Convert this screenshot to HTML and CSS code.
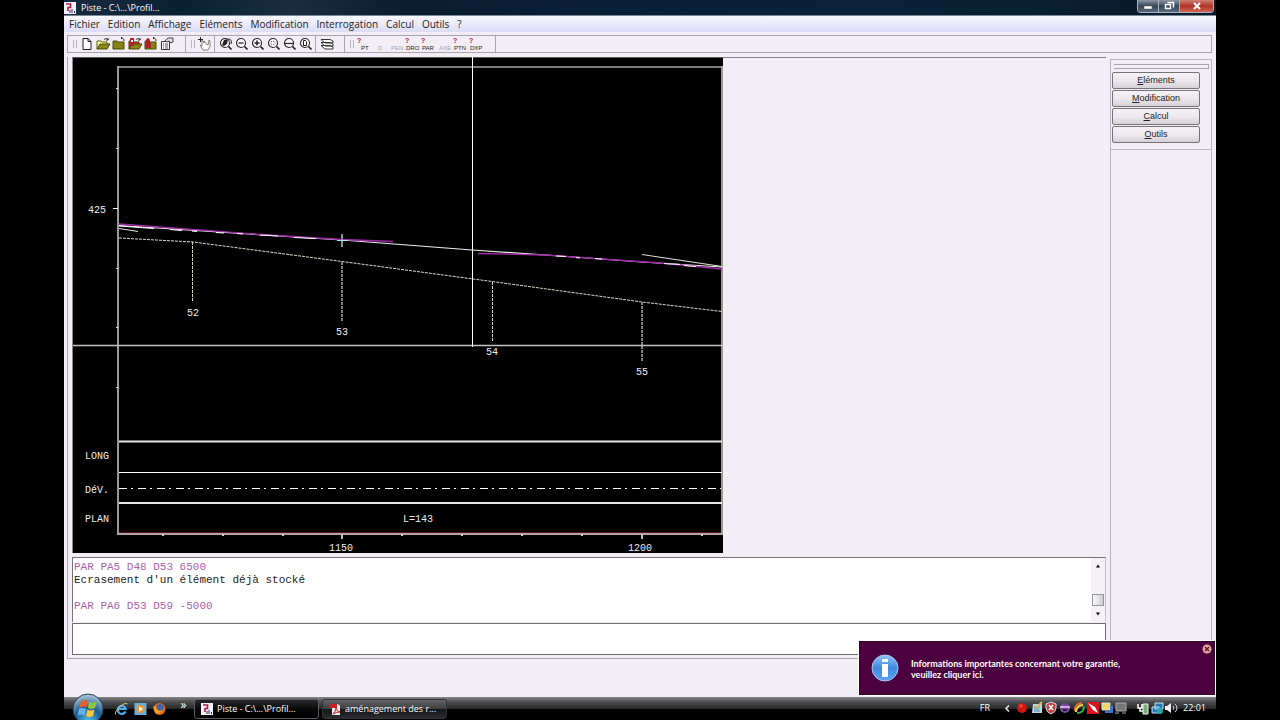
FILE: index.html
```html
<!DOCTYPE html>
<html lang="fr">
<head>
<meta charset="utf-8">
<title>Piste - C:\...\Profil...</title>
<link rel="stylesheet" href="styles.css">
</head>
<body>
<svg class="defs" aria-hidden="true">
  <symbol id="i-app" viewBox="0 0 12 12"><rect width="12" height="12" fill="#f4f2fb"/><path d="M2 2h4.500v3.500H4V9" fill="none" stroke="#b01c40" stroke-width="1.600"/><path d="M6 8v3M8 7v4M10.500 9v2" stroke="#262a78" fill="none"/></symbol>
  <symbol id="i-new" viewBox="0 0 16 16"><path d="M4 2.500h5l3 3v8H4zM9 2.500v3h3" fill="#fff" stroke="#222"/></symbol>
  <symbol id="i-folder" viewBox="0 0 16 16"><path d="M2 13V5h4l1 1h5v2" fill="#ffffa8" stroke="#5b5b08"/><path d="M2 13l3-5h10l-3 5z" fill="#898917" stroke="#4b4b08"/><path d="M9 4c1-2 3-2 4 0m0-2v2h-2" fill="none" stroke="#222"/></symbol>
  <symbol id="i-closed" viewBox="0 0 16 16"><path d="M2 5h4l1 1h6v7H2z" fill="#858517" stroke="#4b4b08"/><path d="M13 5c0-2-1-3-3-3m1-1L10 2l1 1" fill="none" stroke="#222"/></symbol>
  <symbol id="i-redopen" viewBox="0 0 16 16"><path d="M2 13V5h4l1 1h5v2" fill="#d33" stroke="#5b2b08"/><path d="M2 13l3-5h10l-3 5z" fill="#898917" stroke="#4b4b08"/><path d="M3 2h4v8H3z" fill="#b2202a"/><path d="M9 4c1-2 3-2 4 0m0-2v2h-2" fill="none" stroke="#222"/><path d="M4 4h2v2H4z" fill="#fff"/></symbol>
  <symbol id="i-redclosed" viewBox="0 0 16 16"><path d="M2 5h4l1 1h6v7H2z" fill="#858517" stroke="#4b4b08"/><path d="M3 7V4q2-4 4 0v3h1v5H2V7z" fill="#b2202a"/><path d="M13 5c0-2-1-3-3-3m1-1L10 2l1 1" fill="none" stroke="#222"/></symbol>
  <symbol id="i-props" viewBox="0 0 16 16"><path d="M2.500 5.500h8v8h-8z" fill="#fff" stroke="#333"/><path d="M4 8h1m1 0h3M4 10h1m1 0h3M4 12h1m1 0h3" stroke="#555"/><path d="M6 5l3-3h5v4l-2 1-2-2-2 1z" fill="#ddd" stroke="#444"/></symbol>
  <symbol id="i-hand" viewBox="0 0 16 16"><path d="M6 14L3 9l2 1V4l2 3V5l2 3 2 1 1-5 1 1v5l-2 4z" fill="#fff" stroke="#666" stroke-width=".8"/><path d="M1 3.500h5M3.500 1v5" stroke="#222"/></symbol>
  <symbol id="i-lens" viewBox="0 0 16 16"><circle cx="7" cy="7" r="4.500" fill="#fff" stroke="#222" stroke-width="1.100"/><path d="M10.500 10.500l3 3" stroke="#222" stroke-width="1.700"/></symbol>
  <symbol id="i-layers" viewBox="0 0 16 16"><path d="M2 9.500l4 3.500h8v-2l-3-1.500zM2 6.500L6 10h8V8l-3-1.500zM2 3.500L6 7h8V5l-3-1.500z" fill="#fff" stroke="#222" stroke-width=".9"/></symbol>
</svg>

<div class="desktop">
  <header class="titlebar">
    <svg class="appicon"><use href="#i-app"/></svg>
    <h1 class="title">Piste - C:\...\Profil...</h1>
    <div class="controls">
      <button class="ctl" aria-label="Réduire"><svg viewBox="0 0 12 10"><path d="M2 5h8v3H2z" fill="#fff" stroke="#555" stroke-width=".5"/></svg></button>
      <button class="ctl" aria-label="Restaurer"><svg viewBox="0 0 12 10"><path d="M4.500 1.500h6v5" fill="none" stroke="#fff" stroke-width="1.500"/><path d="M2.500 3.500h5v4h-5z" fill="none" stroke="#fff" stroke-width="1.500"/></svg></button>
      <button class="ctl close" aria-label="Fermer"><svg viewBox="0 0 12 10"><path d="M3 2l6 6M9 2L3 8" stroke="#fff" stroke-width="2"/></svg></button>
    </div>
  </header>

  <nav class="menubar">
    <button>Fichier</button><button>Edition</button><button>Affichage</button><button>Eléments</button><button>Modification</button><button>Interrogation</button><button>Calcul</button><button>Outils</button><button>?</button>
  </nav>

  <div class="toolrow">
    <div class="toolbar files">
      <span class="grip"></span>
      <button aria-label="Nouveau"><svg><use href="#i-new"/></svg></button>
      <button aria-label="Ouvrir"><svg><use href="#i-folder"/></svg></button>
      <button aria-label="Fermer le dossier"><svg><use href="#i-closed"/></svg></button>
      <button aria-label="Ouvrir verrouillé"><svg><use href="#i-redopen"/></svg></button>
      <button aria-label="Verrouiller"><svg><use href="#i-redclosed"/></svg></button>
      <button aria-label="Propriétés"><svg><use href="#i-props"/></svg></button>
    </div>
    <div class="toolbar view">
      <span class="grip"></span>
      <button aria-label="Déplacer"><svg><use href="#i-hand"/></svg></button>
      <span class="rule"></span>
      <button aria-label="Zoom dynamique"><svg viewBox="0 0 16 16"><use href="#i-lens"/><path d="M4 9l2-5 4-1-1 5-3 2z" fill="#222"/><path d="M10 3c3 0 4 2 3 5" fill="none" stroke="#222"/></svg></button>
      <button aria-label="Zoom arrière"><svg viewBox="0 0 16 16"><use href="#i-lens"/><path d="M4.500 7h5" stroke="#222" stroke-width="1.300"/></svg></button>
      <button aria-label="Zoom avant"><svg viewBox="0 0 16 16"><use href="#i-lens"/><path d="M4.500 7h5M7 4.500v5" stroke="#222" stroke-width="1.500"/></svg></button>
      <button aria-label="Zoom fenêtre"><svg viewBox="0 0 16 16"><use href="#i-lens"/><path d="M5 5.500h4v3H5z" fill="none" stroke="#777" stroke-dasharray="1 1"/></svg></button>
      <button aria-label="Zoom largeur"><svg viewBox="0 0 16 16"><use href="#i-lens"/><path d="M2 7.500h10" stroke="#222" stroke-width="1.200"/></svg></button>
      <button aria-label="Zoom page"><svg viewBox="0 0 16 16"><use href="#i-lens"/><path d="M5.500 4.500h2l1 1v4h-3z" fill="none" stroke="#222"/></svg></button>
      <span class="rule"></span>
      <button aria-label="Calques"><svg><use href="#i-layers"/></svg></button>
    </div>
    <div class="toolbar query">
      <span class="grip"></span>
      <button><svg viewBox="0 0 16 16"><text class="q" x="1" y="7">?</text><text x="5" y="14">PT</text></svg></button>
      <button disabled><svg viewBox="0 0 16 16"><text x="6" y="14">D</text></svg></button>
      <button disabled><svg viewBox="0 0 16 16"><text x="3" y="14">PEN</text></svg></button>
      <button><svg viewBox="0 0 16 16"><text class="q" x="1" y="7">?</text><text x="2" y="14">DRO</text></svg></button>
      <button><svg viewBox="0 0 16 16"><text class="q" x="1" y="7">?</text><text x="2" y="14">PAR</text></svg></button>
      <button disabled><svg viewBox="0 0 16 16"><text x="3" y="14">AXE</text></svg></button>
      <button><svg viewBox="0 0 16 16"><text class="q" x="1" y="7">?</text><text x="2" y="14">PTN</text></svg></button>
      <button><svg viewBox="0 0 16 16"><text class="q" x="1" y="7">?</text><text x="2" y="14">DXP</text></svg></button>
    </div>
  </div>

  <main class="main">
    <section class="work">
      <div class="canvas">
        <svg class="plot" viewBox="73 57 650 496" role="img" aria-label="Profil en long">
          <rect x="73" y="57" width="650" height="496" fill="#000"/>
          <path d="M73 57.500H723" stroke="#555"/>
          <path d="M117 67h606" stroke="#aaa" stroke-width="1.500"/>
          <path d="M118 66v469M722 66v469" stroke="#9c9798" stroke-width="2"/>
          <path d="M119 532.500h602" stroke="#5c1020"/>
          <path d="M117 534h606" stroke="#aaa5a6" stroke-width="2"/>
          <path d="M113 208.500h5" stroke="#fff"/>
          <path d="M116 88.500h2M116 148.500h2M116 268.500h2M116 327.500h2M116 387.500h2" stroke="#ddd"/>
          <path d="M163 534v2M223 534v2M283 534v2M402 534v2M462 534v2M522 534v2M582 534v2M702 534v2" stroke="#ccc" stroke-width="2"/>
          <path d="M342 534v5M642 534v5" stroke="#bbb" stroke-width="2"/>
          <path d="M119 441.500h603M119 503h603" stroke="#e8e6e6" stroke-width="2"/>
          <path d="M119 472.500h603" stroke="#fff"/>
          <path d="M119 488.500h602" stroke="#fff" stroke-dasharray="8 4 2 5"/>
          <path d="M119 225.500L342 240L472 250L560 256L642 262L722 267" fill="none" stroke="#eee" stroke-width="1.200"/>
          <path d="M119 224L260 234.500L342 239.500L393 241.500M478 253.500L545 255L602 259L660 263L722 269" fill="none" stroke="#a02aa8" stroke-width="1.300"/>
          <path d="M119 226l35 2.500M170 229.500l12 1M192 231l5 .5M216 232.500l8 .5M237 233.500l6 .5M260 235l18 1M294 237.500l22 1M556 256l10 .5M576 257.500l4 .5M595 258.500l7 .5M664 263.500l16 1M684 265.500l12 1" stroke="#fff" stroke-width="1.200"/>
          <path d="M119 228.500l19 3M642 254.500l80 12" stroke="#e4e4dc"/>
          <path d="M119 238L193 242L342 261.500L492 281.500L642 302L722 311.500" fill="none" stroke="#d8d8c8" stroke-dasharray="3 1"/>
          <path d="M192.500 242v60M492.500 282v60" stroke="#d8d8b8" stroke-dasharray="3 1"/>
          <path d="M342 262v60M642 302v60" stroke="#85856c" stroke-width="2" stroke-dasharray="3 1"/>
          <path d="M73 345.500h650" stroke="#c4c2c3" stroke-width="1.500"/>
          <path d="M472.500 57v290" stroke="#fff"/>
          <path d="M342 234v13" stroke="#719b9b" stroke-width="2"/><path d="M337 240.500h11" stroke="#a7e9e9"/>
          <text x="88" y="213">425</text>
          <text x="187" y="316">52</text><text x="336" y="335">53</text><text x="486" y="355">54</text><text x="636" y="375">55</text>
          <text x="85" y="459">LONG</text><text x="85" y="493">DéV.</text><text x="85" y="522">PLAN</text>
          <text x="403" y="522">L=143</text><text x="329" y="551">1150</text><text x="628" y="551">1200</text>
        </svg>
      </div>
      <div class="console">
        <div class="log">
          <p class="cmd">PAR PA5 D48 D53 6500</p>
          <p>Ecrasement d'un élément déjà stocké</p>
          <p>&nbsp;</p>
          <p class="cmd">PAR PA6 D53 D59 -5000</p>
        </div>
        <div class="scroll">
          <button aria-label="Défiler vers le haut"><svg viewBox="0 0 6 4"><path d="M1 3.500l2-3 2 3z"/></svg></button>
          <span class="thumb"></span>
          <button aria-label="Défiler vers le bas"><svg viewBox="0 0 6 4"><path d="M1 .5l2 3 2-3z"/></svg></button>
        </div>
      </div>
      <input class="entry" type="text" aria-label="Commande">
    </section>
    <aside class="side">
      <span class="hgrip"></span>
      <button><u>E</u>léments</button>
      <button><u>M</u>odification</button>
      <button><u>C</u>alcul</button>
      <button><u>O</u>utils</button>
      <span class="hline"></span>
    </aside>
  </main>
  <div class="status"></div>

  <div class="notice" role="alert">
    <svg class="info" viewBox="0 0 28 28"><defs><linearGradient id="g-info" x1="0" y1="0" x2="0" y2="1"><stop offset="0" stop-color="#91c3f6"/><stop offset=".5" stop-color="#4289dc"/><stop offset="1" stop-color="#5aa5f4"/></linearGradient></defs><circle cx="14" cy="14" r="13" fill="url(#g-info)" stroke="#a7c7ef"/><path d="M11 5h6v3h-6zM11 10h6v13h-6z" fill="#fff"/></svg>
    <p>Informations importantes concernant votre garantie,<br>veuillez cliquer ici.</p>
    <button class="dismiss" aria-label="Fermer la notification"><svg viewBox="0 0 10 10"><circle cx="5" cy="5" r="4.500" fill="#e9a59f"/><path d="M3 3l4 4M7 3L3 7" stroke="#5a2030" stroke-width="1.500"/></svg></button>
  </div>

  <footer class="taskbar">
    <button class="start" aria-label="Démarrer"><svg viewBox="0 0 32 32"><defs><radialGradient id="g-orb" cx=".5" cy=".9" r=".9"><stop offset="0" stop-color="#49c0ea"/><stop offset=".5" stop-color="#1b5c91"/><stop offset="1" stop-color="#b5cbdc"/></radialGradient></defs><circle cx="16" cy="16" r="15" fill="url(#g-orb)" stroke="#24404f"/><path d="M9 8q4-2 7 0l-1.500 6.500q-3-2-7 0z" fill="#e8602a"/><path d="M17 8.500q4 2 8 0l-2 6.500q-3 2-7 0z" fill="#8cc63f"/><path d="M7 16q3-2 7 0l-1.500 6.500q-3-2-7 0z" fill="#5fb4ee"/><path d="M15.500 16.500q3 2 7 0L21 23q-4 2-7 0z" fill="#fbc63a"/></svg></button>
    <div class="quick">
      <button aria-label="Internet Explorer"><svg viewBox="0 0 14 14"><path d="M11 9.500A4 4 0 1 1 11.200 7H4" fill="none" stroke="#49aef0" stroke-width="2.200"/><path d="M1 12.500C-1 9 10-1 13 2" fill="none" stroke="#d9c35b"/></svg></button>
      <button aria-label="Lecteur"><svg viewBox="0 0 14 14"><rect x="1" y="1" width="12" height="12" fill="#64aee0"/><rect x="3" y="3" width="8" height="8" rx="3" fill="#ef942c"/><path d="M5.500 4l4 3-4 3z" fill="#fff"/></svg></button>
      <button aria-label="Firefox"><svg viewBox="0 0 14 14"><circle cx="7" cy="7" r="6" fill="#e76c18"/><circle cx="7.500" cy="5.500" r="3.500" fill="#3c66b0"/><path d="M1 4q3 0 3 3 2 3 6 1-2 4-6 3-3-2-3-7z" fill="#f3a229"/></svg></button>
    </div>
    <button class="more" aria-label="Plus">»</button>
    <button class="task active"><svg><use href="#i-app"/></svg>Piste - C:\...\Profil...</button>
    <button class="task"><svg viewBox="0 0 12 12"><path d="M3 1h6l2 2v9H3z" fill="#eee"/><path d="M0 1h8v4H0z" fill="#c92027"/><path d="M4 11q3-3 3-6 1 4 4 4-4 0-7 2z" fill="none" stroke="#c92027"/></svg>aménagement des r...</button>
    <div class="tray">
      <span class="lang">FR</span>
      <button aria-label="Afficher les icônes"><svg viewBox="0 0 14 14"><path d="M7 4.500L4 7.500l3 3" fill="none" stroke="#eee" stroke-width="1.500"/></svg></button>
      <svg viewBox="0 0 14 14"><circle cx="6" cy="7" r="5" fill="#cb1711"/><circle cx="5" cy="5" r="2" fill="#e5402f"/></svg>
      <svg viewBox="0 0 14 14"><path d="M3 3h9v9H2z" fill="#b9d6e4"/><path d="M4 6h6M4 8h5M4 10h6" stroke="#4b8ab0"/><path d="M12 1L6 7" stroke="#e8b948" stroke-width="2"/></svg>
      <svg viewBox="0 0 14 14"><path d="M7 1l5 2v4q0 4-5 6-5-2-5-6V3z" fill="#c63b40" stroke="#ddd"/><path d="M5 4l4 5M9 4L5 9" stroke="#fff" stroke-width="1.500"/></svg>
      <svg viewBox="0 0 14 14"><circle cx="7" cy="7" r="5" fill="#764a9c"/><path d="M2 6h10" stroke="#d1a9e2" stroke-width="2"/><path d="M5 9h4" stroke="#271a38" stroke-width="2"/></svg>
      <svg viewBox="0 0 14 14"><path d="M3 10C2 5 6 2 10 2" fill="none" stroke="#e6672e" stroke-width="2"/><path d="M4 11C4 7 7 4 11 4" fill="none" stroke="#e8d44d" stroke-width="2"/><path d="M5 12C10 12 12 9 12 5" fill="none" stroke="#35aa57" stroke-width="2"/></svg>
      <svg viewBox="0 0 14 14"><path d="M1 1h12v12H1z" fill="#d8151c"/><path d="M2 2l7 4 3 6-5-3z" fill="#fff"/></svg>
      <svg viewBox="0 0 14 14"><path d="M2 2h8v7H2z" fill="#f0d765" stroke="#d8e5f0"/><path d="M10 4l3 1v7H5v-2h5z" fill="#3975cc"/></svg>
      <svg viewBox="0 0 14 14"><path d="M2 2h10v8H2z" fill="#777" stroke="#aaa"/><path d="M1 12h4m3 0h4" stroke="#aaa"/></svg>
      <span class="traygap"></span>
      <svg viewBox="0 0 14 14"><path d="M7 3h5v10H7z" fill="#7caf77" stroke="#eee"/><path d="M2 3v4h4V3M4 7v3h3" fill="none" stroke="#fff" stroke-width="1.500"/></svg>
      <svg viewBox="0 0 14 14"><path d="M5 2h8v6H5zM2 6h7v6H2z" fill="#2378b9" stroke="#cbe0ee"/><circle cx="10" cy="10" r="3" fill="#2aa6a0"/></svg>
      <svg viewBox="0 0 14 14"><path d="M1 5h2l4-3v10L3 9H1z" fill="#eee"/><path d="M9 5q2 2 0 4M11 3q4 4 0 8" fill="none" stroke="#ddd"/></svg>
      <time class="clock">22:01</time>
    </div>
  </footer>
</div>
</body>
</html>
```
FILE: styles.css
```css
* { box-sizing: border-box; }
body { margin: 0; background: #000; font-family: "Open Sans", "Noto Sans", sans-serif; font-size: 9px; color: #222; }
button { margin: 0; padding: 0; border: 0; background: none; font: inherit; color: inherit; }
p { margin: 0; }
.defs { position: absolute; width: 0; height: 0; }

.desktop { position: relative; display: flex; flex-direction: column; min-height: 100vh; margin: 0 5%; background: #f3edf5; }

.titlebar { display: flex; align-items: center; height: 16px; padding: 0 2px 0 0; background: linear-gradient(100deg, #182c40, #0a2135 10%, #182d41 20%, #081d32 30%, #0b2239 70%, #061b2a); border-bottom: 1px solid #7d8896; color: #fff; }
.appicon { width: 12px; height: 12px; }
.title { flex: 1; margin: 0 0 0 5px; font-size: 9px; font-weight: 500; line-height: 14px; }
.controls { display: flex; align-self: flex-start; height: 13px; border: 1px solid #a9b4c0; border-top: 0; border-radius: 0 0 4px 4px; overflow: hidden; }
.ctl { display: flex; align-items: center; justify-content: center; width: 21px; border-right: 1px solid #a9b4c0; background: linear-gradient(#8b96a4, #36475a 50%, #58697c); }
.ctl svg { width: 12px; height: 10px; }
.close { width: 33px; border: 0; background: linear-gradient(#cf8172, #b13327 50%, #d36551); }

.menubar { display: flex; gap: 8px; height: 16px; padding-left: 5px; background: linear-gradient(#f8f8ff, #dcdcf6); font-size: 10px; line-height: 15px; }

.toolrow { display: flex; margin: 3px 4px 0 3px; height: 18px; border: 1px solid #aaa5ad; }
.toolbar { display: flex; align-items: center; padding: 0 0 0 2px; border-right: 1px solid #aaa5ad; }
.files { padding-right: 10px; }
.view { padding-right: 9px; }
.query { padding-right: 11px; }
.toolbar button, .toolbar svg { display: block; width: 16px; height: 16px; }
.grip { width: 4px; height: 8px; margin: 0 2px 0 3px; border: solid #bbb5bd; border-width: 0 1px; }
.rule { width: 1px; height: 16px; margin: 0 3px 0 1px; background: #aaa5ad; }
.query text { font: 6px "Liberation Sans", sans-serif; fill: #222; }
.query .q { font-size: 7px; font-weight: 700; fill: #b51632; }
.query [disabled] text { fill: #aaa5ab; }

.main { display: flex; flex: 1; gap: 4px; margin: 4px 4px 0 3px; border-bottom: 1px solid #aaa5ad; }
.work { display: flex; flex: 1; flex-direction: column; min-width: 0; padding: 0 0 3px 4px; border-left: 1px solid #aaa5ad; }
.canvas { flex: 1; margin-bottom: 4px; border-left: 1px solid #8a868c; background: linear-gradient(#8a868c 1px, transparent 1px); }
.plot { display: block; width: 650px; max-width: 100%; }
.plot text { font: 10px "Liberation Mono", monospace; fill: #eee; }
.console { display: flex; height: 65px; border: 1px solid #77737a; border-right-color: #c6c1c8; border-bottom: 0; background: #fff; font: 11px/13px "Liberation Mono", monospace; }
.log { flex: 1; padding: 3px 0 0 1px; }
.cmd { color: #a862ad; }
.scroll { display: flex; flex-direction: column; width: 14px; padding: 4px 1px; background: #f5f1f6; align-items: center; }
.scroll button { display: flex; align-items: center; justify-content: center; width: 12px; height: 8px; }
.scroll svg { width: 6px; height: 4px; }
.thumb { width: 12px; height: 12px; margin: auto 0 4px; border: 1px solid #99959c; background: linear-gradient(90deg, #fafafa, #ccc); }
.entry { width: 100%; height: 32px; border: 1px solid #6f6b72; background: #fff; padding: 2px; margin-top: 1px; font: 11px "Liberation Mono", monospace; }

.side { display: flex; flex-direction: column; gap: 1px; width: 102px; margin-top: 2px; padding: 4px 0 0 1px; border: 1px solid #bbb6bd; border-bottom: 0; font-family: "Liberation Sans", sans-serif; }
.side button { width: 88px; height: 17px; border: 1px solid #77737a; border-radius: 2px; background: linear-gradient(#f6f3f7, #ece8ed 50%, #d5d1d7); line-height: 15px; }
.hgrip { height: 5px; margin: 0 2px 2px; border: solid #aaa5ad; border-width: 1px 1px 1px 0; }
.hline { height: 1px; margin: 5px 0 0 -1px; background: #bbb6bd; }
.status { height: 38px; }

.notice { position: absolute; right: 1px; bottom: 26px; display: flex; gap: 12px; width: 356px; height: 54px; padding: 12px 11px; background: #4d0040; border: 1px solid #2f0728; outline: 1px solid #fff; color: #fff; font: 700 9px/11px Lato, "Open Sans", sans-serif; }
.notice p { padding-top: 4px; white-space: nowrap; }
.info { width: 28px; height: 28px; }
.dismiss { position: absolute; top: 2px; right: 2px; width: 10px; height: 10px; }
.dismiss svg { display: block; }

.taskbar { position: relative; display: flex; align-items: center; height: 24px; padding: 0 0 1px 50px; background: linear-gradient(#858688, #4c4e50 20%, #27292b 48%, #000 52%); color: #fff; }
.start { position: absolute; left: 8px; bottom: -4px; width: 32px; height: 32px; clip-path: inset(0 0 4px); }
.start svg { display: block; }
.quick { display: flex; gap: 4px; }
.quick button, .quick svg { display: block; width: 15px; height: 14px; }
.more { width: 27px; height: 24px; padding: 0 0 8px 6px; font-size: 12px; line-height: 12px; }
.task { display: flex; align-items: center; gap: 4px; width: 125px; height: 20px; margin-right: 3px; padding: 0 6px; border: 1px solid #303235; border-radius: 3px; background: linear-gradient(#656769, #3b3d3f 48%, #151617 52%, #292b2c); white-space: nowrap; }
.active { background: linear-gradient(#27292b, #080808 50%, #000); border-color: #5b5d60; }
.task svg { flex: none; width: 12px; height: 12px; }
.tray { display: flex; align-items: center; margin-left: auto; padding: 0 10px 2px 0; }
.tray svg { display: block; width: 14px; height: 14px; }
.lang { margin-right: 12px; }
.traygap { width: 8px; }
.clock { margin-left: 5px; }
```
